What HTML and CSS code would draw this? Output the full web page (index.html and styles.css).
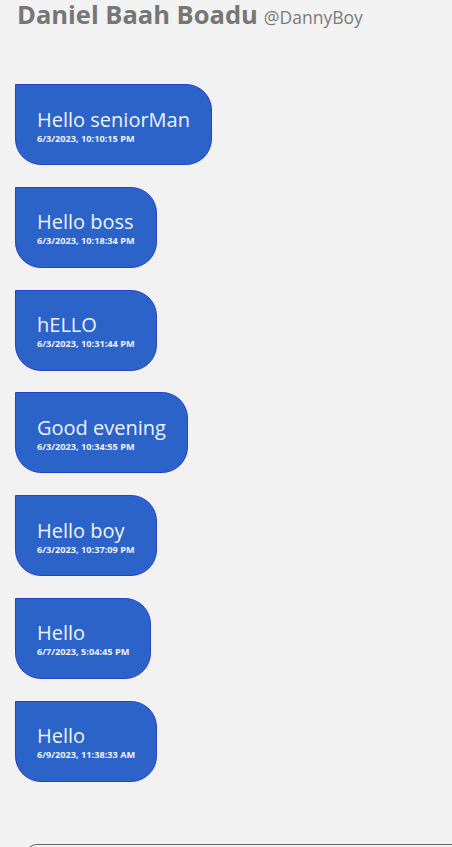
FILE: index.html
```html
<!DOCTYPE html>
<html lang="en">
<head>
<meta charset="utf-8">
<title>Chat</title>
<link rel="stylesheet" href="styles.css">
</head>
<body>
<div class="page">
  <header class="profile">
    <h1 class="name">Daniel Baah Boadu</h1>
    <span class="handle">@DannyBoy</span>
  </header>
  <ul class="messages">
    <li class="bubble"><p class="text">Hello seniorMan</p><span class="time">6/3/2023, 10:10:15 PM</span></li>
    <li class="bubble"><p class="text">Hello boss</p><span class="time">6/3/2023, 10:18:34 PM</span></li>
    <li class="bubble"><p class="text">hELLO</p><span class="time">6/3/2023, 10:31:44 PM</span></li>
    <li class="bubble"><p class="text">Good evening</p><span class="time">6/3/2023, 10:34:55 PM</span></li>
    <li class="bubble"><p class="text">Hello boy</p><span class="time">6/3/2023, 10:37:09 PM</span></li>
    <li class="bubble"><p class="text">Hello</p><span class="time">6/7/2023, 5:04:45 PM</span></li>
    <li class="bubble"><p class="text">Hello</p><span class="time">6/9/2023, 11:38:33 AM</span></li>
  </ul>
  <div class="composer"></div>
</div>
</body>
</html>
```
FILE: styles.css
```css
html, body {
  margin: 0;
  padding: 0;
  background: #f2f2f2;
  height: 100%;
  overflow: hidden;
}
.page {
  font-family: "Open Sans", "Noto Sans", sans-serif;
  padding: 0 0 0 15px;
  display: flex;
  flex-direction: column;
}
.profile {
  display: flex;
  align-items: baseline;
  gap: 6px;
  padding: 1px 0 0 2px;
  height: 29px;
}
.name {
  margin: 0;
  font-size: 25.5px;
  line-height: 26px;
  font-weight: 700;
  color: #767676;
}
.handle {
  font-size: 17.5px;
  line-height: 20px;
  color: #7a7a7a;
}
.messages {
  list-style: none;
  margin: 54px 0 0 0;
  padding: 0;
  display: flex;
  flex-direction: column;
  align-items: flex-start;
  gap: 21.8px;
}
.bubble {
  box-sizing: border-box;
  height: 81px;
  padding: 2px 21px 0 21px;
  display: flex;
  flex-direction: column;
  justify-content: center;
  background: #2b63c9;
  border: 1px solid #2b3fcf;
  border-radius: 0 26px 26px 26px;
  color: #eef2fb;
}
.text {
  margin: 0 0 1px 0;
  font-size: 20px;
  line-height: 25px;
  font-weight: 500;
}
.time {
  font-size: 9.2px;
  line-height: 12px;
  font-weight: 700;
}
.composer {
  margin: 62px 0 0 10px;
  height: 40px;
  border: 1.5px solid #666666;
  border-right: none;
  border-radius: 12px 0 0 12px;
}
```
